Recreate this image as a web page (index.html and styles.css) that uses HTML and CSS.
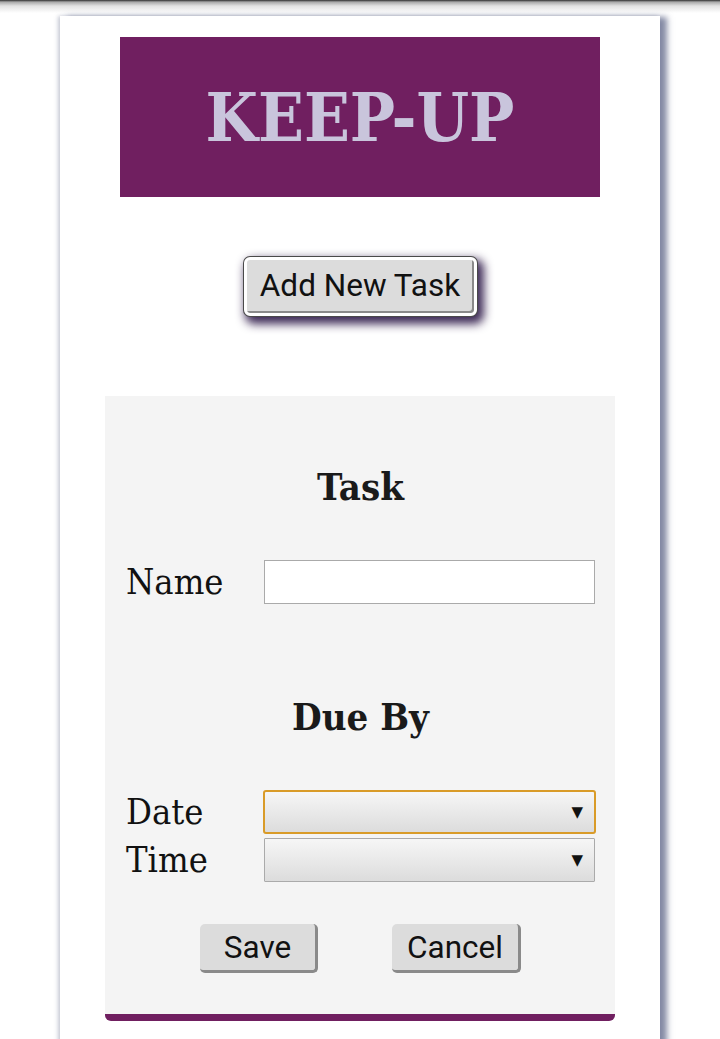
FILE: index.html
```html
<!DOCTYPE html>
<html lang="en">
<head>
<meta charset="utf-8">
<title>Keep-Up</title>
<link rel="stylesheet" href="styles.css">
</head>
<body>
<main class="card">
  <header class="banner"><h1 class="banner-title">KEEP-UP</h1></header>
  <button class="add-btn" type="button">Add New Task</button>
  <form class="panel">
    <h2 class="section-title title-task">Task</h2>
    <div class="field field-name">
      <label class="field-label" for="name">Name</label>
      <input class="text-input" id="name" type="text">
    </div>
    <h2 class="section-title title-due">Due By</h2>
    <div class="field field-date">
      <label class="field-label" for="date">Date</label>
      <div class="select-wrap focused"><select class="select" id="date"><option></option></select></div>
    </div>
    <div class="field field-time">
      <label class="field-label" for="time">Time</label>
      <div class="select-wrap"><select class="select" id="time"><option></option></select></div>
    </div>
    <div class="actions">
      <button class="action-btn save" type="button">Save</button>
      <button class="action-btn cancel" type="button">Cancel</button>
    </div>
  </form>
</main>
</body>
</html>
```

FILE: styles.css
```css
html {
  overflow: hidden;
}
body {
  margin: 0;
  background: #fff linear-gradient(to bottom, #2e2e2e 0px, #a8a8a8 2px, #e2e2e2 6px, #ffffff 13px) top left / 100% 13px no-repeat;
  font-family: "DejaVu Serif", serif;
  color: #111;
}
.card {
  width: 600px;
  min-height: 1080px;
  margin: 16px auto 0;
  background: #fff;
  box-shadow: 7px 1px 6px rgba(110, 118, 148, 0.85), -2px 0 4px rgba(95, 103, 135, 0.35);
  display: flex;
  flex-direction: column;
  align-items: center;
  padding-top: 21px;
  box-sizing: border-box;
}
.banner {
  width: 480px;
  height: 160px;
  background: #701f60;
  display: flex;
  align-items: center;
  justify-content: center;
}
.banner-title {
  margin: 0;
  font-family: "DejaVu Serif Condensed", "DejaVu Serif", serif;
  font-stretch: condensed;
  font-weight: bold;
  font-size: 67px;
  line-height: 1;
  color: #c9c5dc;
}
.add-btn {
  margin-top: 60px;
  width: 233px;
  height: 59px;
  background: #dcdcdc;
  border: 3px solid #fff;
  border-radius: 6px;
  box-shadow: 0 0 0 1px #4a4a4a, 4px 5px 10px 3px rgba(52, 32, 78, 0.95), inset -2px -2px 0 #8a8a8a;
  font-family: Roboto, sans-serif;
  font-size: 31.5px;
  color: #111;
  padding: 0 0 2px;
}
.panel {
  margin-top: 80px;
  width: 510px;
  background: #f4f4f4;
  border-bottom: 7px solid #701f60;
  border-radius: 0 0 6px 6px;
  padding: 71px 20px 41px 21px;
  box-sizing: border-box;
  display: flex;
  flex-direction: column;
}
.section-title {
  margin: 0;
  text-align: center;
  font-family: "DejaVu Serif Condensed", "DejaVu Serif", serif;
  font-stretch: condensed;
  font-weight: bold;
  font-size: 38px;
  line-height: 40px;
  color: #1a1a1a;
}
.field {
  display: grid;
  grid-template-columns: 138px 1fr;
  align-items: center;
}
.field-label {
  font-family: "DejaVu Serif Condensed", "DejaVu Serif", serif;
  font-stretch: condensed;
  font-size: 36px;
  line-height: 44px;
  color: #111;
}
.field-name {
  margin-top: 53px;
}
.text-input {
  height: 44px;
  box-sizing: border-box;
  border: 1px solid #aaa;
  background: #fff;
  margin: 0;
  padding: 0 6px;
}
.title-due {
  margin-top: 93px;
}
.field-date {
  margin-top: 53px;
}
.field-time {
  margin-top: 4px;
}
.select-wrap {
  position: relative;
  height: 44px;
}
.select {
  appearance: none;
  -webkit-appearance: none;
  width: 100%;
  height: 44px;
  box-sizing: border-box;
  margin: 0;
  border: 1px solid #aaa;
  border-radius: 1px;
  background: linear-gradient(to bottom, #f6f6f6, #dcdcdc);
  display: block;
}
.select-wrap.focused .select {
  border: 2px solid #d99b28;
  border-radius: 3px;
  margin-left: -1px;
  width: calc(100% + 2px);
}
.select-wrap::after {
  content: "\25BC";
  position: absolute;
  right: 12px;
  top: 50%;
  transform: translateY(-50%);
  font-family: "DejaVu Sans", sans-serif;
  font-size: 15px;
  color: #111;
  pointer-events: none;
}
.actions {
  margin-top: 42px;
  display: flex;
  justify-content: center;
  gap: 74px;
}
.action-btn {
  height: 49px;
  background: #dcdcdc;
  border: none;
  border-right: 3px solid #8a8a8a;
  border-bottom: 3px solid #8a8a8a;
  border-radius: 5px;
  font-family: Roboto, sans-serif;
  font-size: 31.5px;
  color: #111;
  padding: 0;
}
.save {
  width: 118px;
}
.cancel {
  width: 129px;
}
```
